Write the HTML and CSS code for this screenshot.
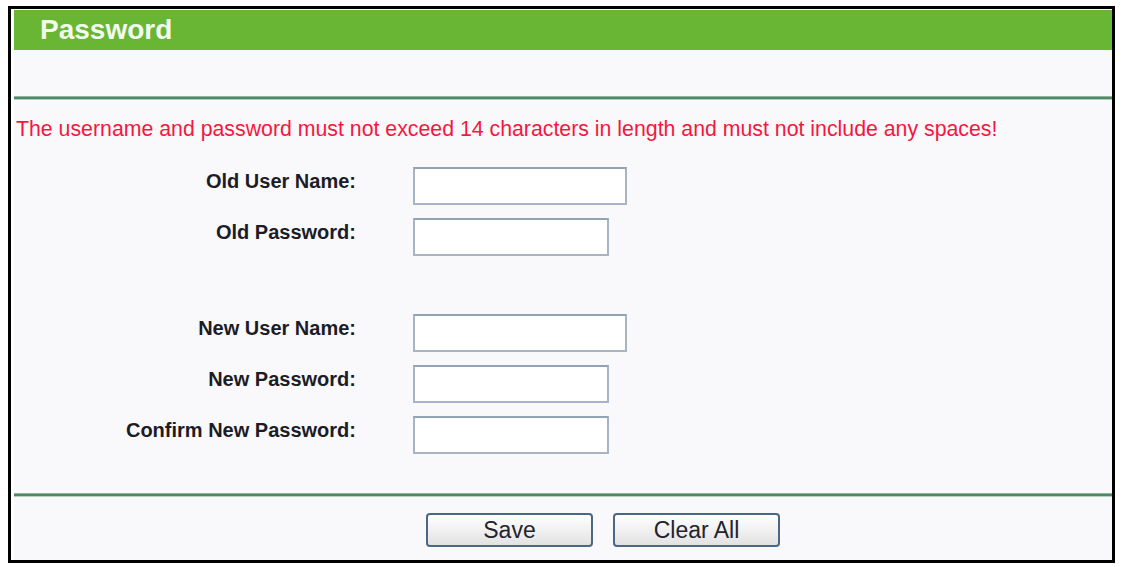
FILE: index.html
```html
<!DOCTYPE html>
<html lang="en">
<head>
	<meta charset="UTF-8">
	<meta name="viewport" content="width=device-width, initial-scale=1.0">
	<title>Password</title>
	<link rel="stylesheet" href="styles.css">
</head>
<body>
	<div class="frame">
		<div class="panel">
			<h1 class="title">Password</h1>
			<div class="line"></div>
			<p class="notice">The username and password must not exceed 14 characters in length and must not include any spaces!</p>
			<form class="form-pw" onsubmit="return false;">
				<div class="row">
					<label class="label" for="oldname">Old User Name:</label>
					<input class="text wide" type="text" id="oldname">
				</div>
				<div class="row">
					<label class="label" for="oldpwd">Old Password:</label>
					<input class="text" type="password" id="oldpwd">
				</div>
				<div class="row blank"></div>
				<div class="row">
					<label class="label" for="newname">New User Name:</label>
					<input class="text wide" type="text" id="newname">
				</div>
				<div class="row">
					<label class="label" for="newpwd">New Password:</label>
					<input class="text" type="password" id="newpwd">
				</div>
				<div class="row">
					<label class="label" for="cfmpwd">Confirm New Password:</label>
					<input class="text" type="password" id="cfmpwd">
				</div>
				<div class="line line-bottom"></div>
				<div class="buttons">
					<button class="btn" type="submit">Save</button>
					<button class="btn" type="reset">Clear All</button>
				</div>
			</form>
		</div>
	</div>
</body>
</html>
```

FILE: styles.css
```css
body{ margin: 0; background: #fff; font-family: "Liberation Sans", Arial, sans-serif;}
.frame{
	width: 1098px; margin: 6px 0 0 8px; border: 3px solid #000;
	padding: 1px 0 0 3px; background: #fff;
}
.panel{ background: #f9f9fb;}
.title{
	margin: 0; height: 40px; line-height: 40px; padding-left: 26px;
	background: #69b534; color: #f3faee; font-size: 28px; font-weight: bold;
}
.line{
	height: 2px; margin-top: 46px; background: #4f8866;
	border-top: 1px solid #8fb79d; border-bottom: 1px solid #b4d0bd;
}
.notice{
	margin: 17px 0 0 2px; font-size: 21.3px; line-height: 24px; color: #f5173f;
}
.form-pw{ margin: 19px 0 0 0;}
.row{ display: flex; align-items: center; height: 51px;}
.row.blank{ height: 45px;}
.label{
	width: 342px; text-align: right; font-size: 20px; font-weight: bold;
	color: #1c1c26; padding-bottom: 8px;
}
.text{
	box-sizing: border-box; width: 196px; height: 38px; margin: 0 0 0 57px;
	border: 2px solid #a6b4c5; border-top-color: #93a3b6; background: #fff;
	padding: 0 4px; font-size: 18px;
}
.text.wide{ width: 214px;}
.line-bottom{ margin-top: 33px;}
.buttons{ display: flex; gap: 20px; padding: 16px 0 13px 412px;}
.btn{
	box-sizing: border-box; width: 167px; height: 34px; padding: 0;
	border: 2px solid #4a6886; border-radius: 4px;
	background: linear-gradient(#ffffff, #f1f1f1 50%, #e2e2e2);
	font-family: "Liberation Sans", Arial, sans-serif; font-size: 23px; color: #23232e;
}
```
